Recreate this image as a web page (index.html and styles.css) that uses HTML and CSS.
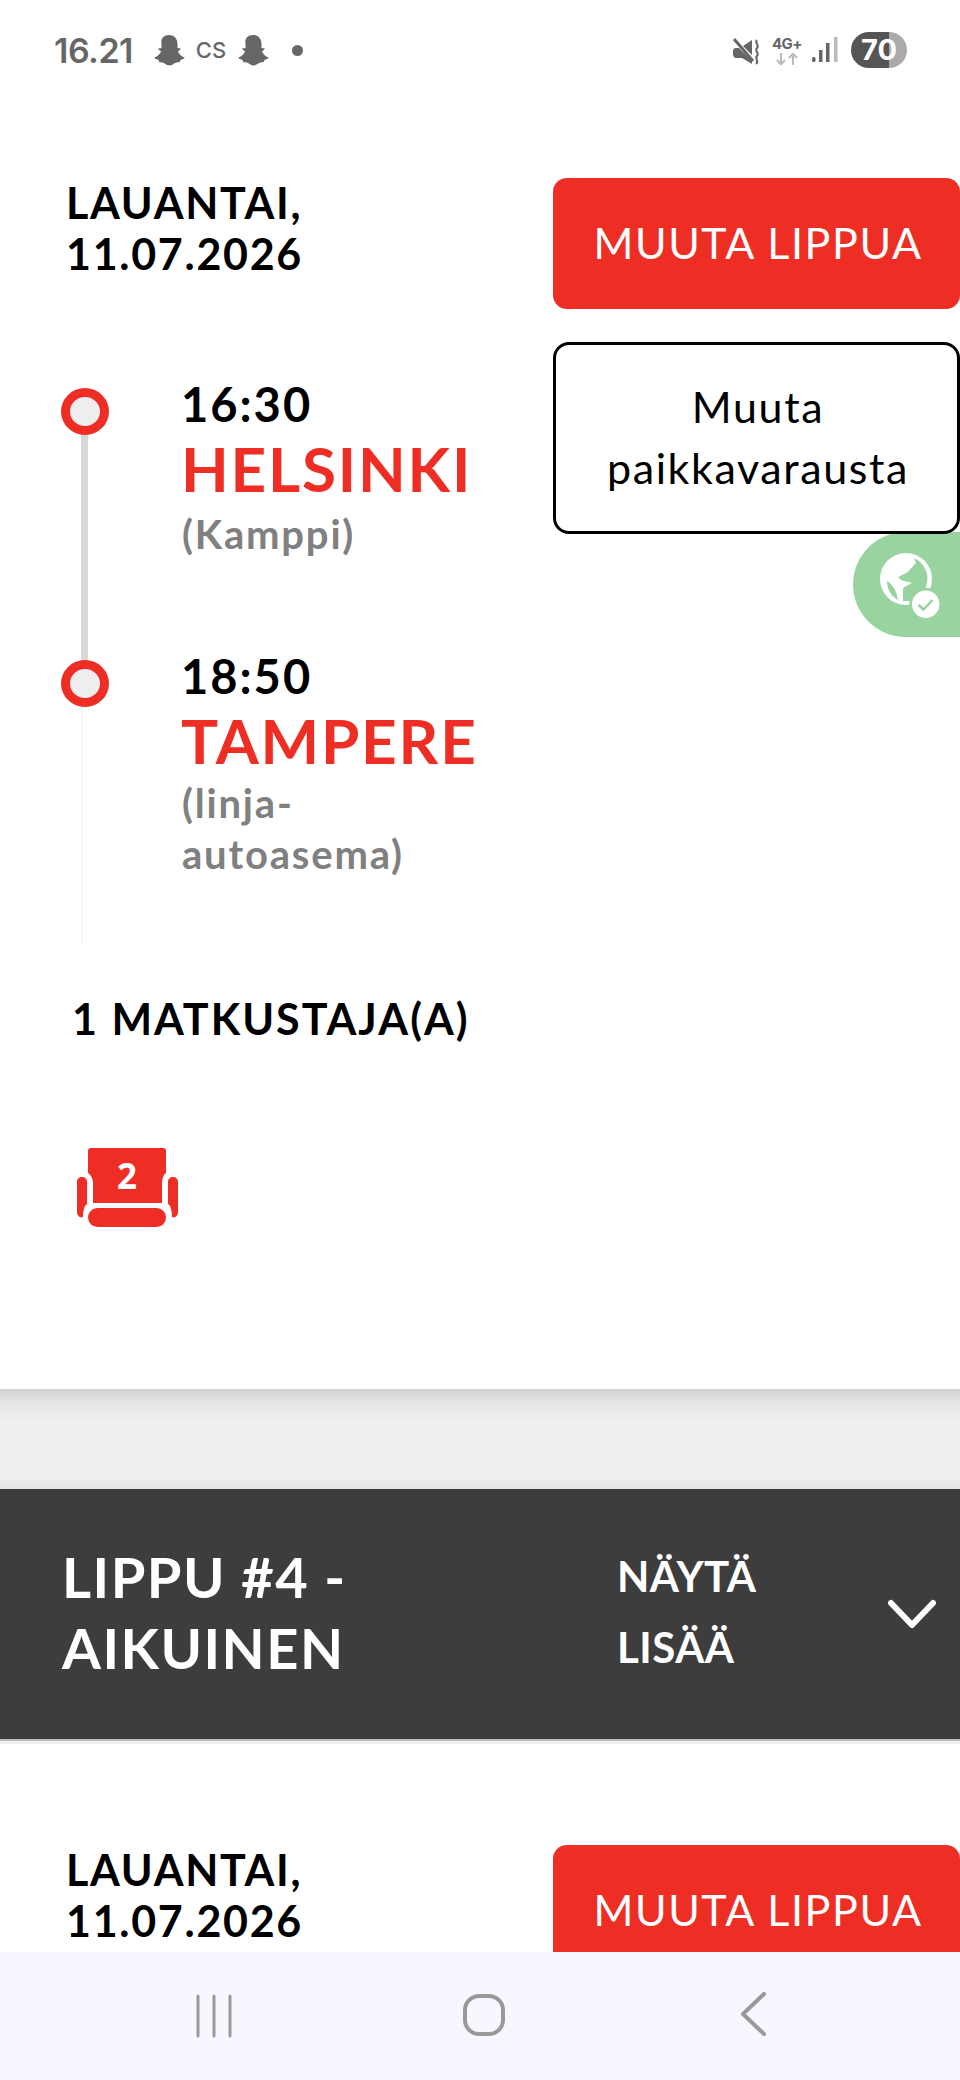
FILE: index.html
```html
<!DOCTYPE html>
<html lang="fi">
<head>
<meta charset="utf-8">
<title>Lippu</title>
<link rel="stylesheet" href="styles.css">
</head>
<body>
<div class="page">
  <header class="status">
    <div class="status-left">
      <span class="clock">16.21</span>
      <svg class="ghost" viewBox="0 0 32 32"><path d="M16 1c5.500 0 8.500 4 8.500 9v4c1 .6 2.300-.3 3 .6.600 1-1.500 1.900-2.500 2.400.5 2.500 3.500 5.500 6.500 6.500.6 1.500-2.500 2-4 2.500-.6 1.500-.5 2.500-2.500 2.300-3-.4-5 3.200-8.500 3.200s-5.500-3.600-8.500-3.200c-2 .2-1.900-.8-2.500-2.300-1.500-.5-4.600-1-4-2.500 3-1 6-4 6.500-6.500-1-.5-3.100-1.400-2.500-2.400.7-.9 2 0 3-.6v-4C7.500 5 10.500 1 16 1z"/></svg>
      <span class="cs">CS</span>
      <svg class="ghost" viewBox="0 0 32 32"><path d="M16 1c5.500 0 8.500 4 8.500 9v4c1 .6 2.300-.3 3 .6.600 1-1.500 1.900-2.500 2.400.5 2.500 3.500 5.500 6.500 6.500.6 1.500-2.500 2-4 2.500-.6 1.500-.5 2.500-2.500 2.300-3-.4-5 3.200-8.500 3.200s-5.500-3.600-8.500-3.200c-2 .2-1.900-.8-2.500-2.300-1.500-.5-4.600-1-4-2.500 3-1 6-4 6.500-6.500-1-.5-3.100-1.400-2.500-2.400.7-.9 2 0 3-.6v-4C7.500 5 10.500 1 16 1z"/></svg>
      <span class="dot"></span>
    </div>
    <div class="status-right">
      <svg class="mute" viewBox="5 8 36 30">
        <path d="M8 24c0-2 1-3 3-3h3l13 13v3l-10-6h-6c-2 0-3-2-3-4zM18 19l9-6v15z" fill="#666"/>
        <path d="M9 12l19 22" stroke="#666" stroke-width="3" fill="none"/>
        <path d="M32 13c-3 3 3 5 0 8s3 5 0 8 3 5-1 8" stroke="#666" stroke-width="2" fill="none"/>
      </svg>
      <div class="net">
        <span class="net-label">4G+</span>
        <svg class="net-arrows" viewBox="0 0 26 12"><path d="M7 0v11M3 7l4 4.500L11 7" stroke="#bbb" stroke-width="2" fill="none"/><path d="M19 12V1M15 5l4-4.500L23 5" stroke="#bbb" stroke-width="2" fill="none"/></svg>
      </div>
      <svg class="signal" viewBox="0 0 26 26"><rect x="0" y="20" width="3.500" height="5" rx="1.500" fill="#666"/><rect x="7" y="13" width="3.500" height="12" fill="#666"/><rect x="14" y="6" width="3.500" height="19" fill="#666"/><rect x="22" y="0" width="3.500" height="25" fill="#bbb"/></svg>
      <div class="battery">70</div>
    </div>
  </header>

  <section class="ticket-head">
    <div class="ticket-info">
      <div class="date">LAUANTAI,<br>11.07.2026</div>
      <div class="route">
        <div class="stop">
          <span class="marker"></span>
          <div class="stop-time">16:30</div>
          <div class="stop-city">HELSINKI</div>
          <div class="stop-place">(Kamppi)</div>
        </div>
        <div class="stop stop-last">
          <span class="marker"></span>
          <div class="stop-time">18:50</div>
          <div class="stop-city">TAMPERE</div>
          <div class="stop-place">(linja-autoasema)</div>
        </div>
      </div>
    </div>
    <div class="ticket-actions">
      <button class="btn-red">MUUTA LIPPUA</button>
      <button class="btn-outline">Muuta<br>paikkavarausta</button>
    </div>
  </section>

  <div class="passengers">1 MATKUSTAJA(A)</div>
  <div class="seat">
    <svg viewBox="0 0 104 82" width="104" height="82">
      <path d="M15 2h72a3 3 0 0 1 3 3v22c-3 2-4 6-4 10v20H17V37c0-4-2-8-5-10V5a3 3 0 0 1 3-3z" fill="#ee2e24"/>
      <path d="M1 36c0-3 2-5 5-5s5 2 5 5v22c-2 1-4 5-4 13-3 1-6-1-6-5z" fill="#ee2e24"/>
      <path d="M102 36c0-3-2-5-5-5s-5 2-5 5v22c2 1 4 5 4 13 3 1 6-1 6-5z" fill="#ee2e24"/>
      <rect x="12" y="62" width="78" height="19" rx="9.500" fill="#ee2e24"/>
      <text x="51" y="43" class="seat-no">2</text>
    </svg>
  </div>

  <div class="divider"></div>

  <section class="accordion">
    <div class="acc-title">LIPPU #4 -<br>AIKUINEN</div>
    <div class="acc-more">NÄYTÄ<br>LISÄÄ</div>
    <svg class="chevron" viewBox="0 0 48 30"><path d="M3 4l21 22L45 4" stroke="#fff" stroke-width="6" fill="none" stroke-linecap="round" stroke-linejoin="round"/></svg>
  </section>

  <section class="ticket-head ticket-next">
    <div class="ticket-info">
      <div class="date">LAUANTAI,<br>11.07.2026</div>
    </div>
    <div class="ticket-actions">
      <button class="btn-red">MUUTA LIPPUA</button>
    </div>
  </section>

  <div class="translate">
    <svg viewBox="0 0 80 80" width="80" height="80">
      <circle cx="36" cy="34" r="26" fill="#fff"/>
      <path d="M44 13l2 5-3 3-5 6-10 5 3 3 11 3-9 5 0 7 0 6A22.500 22.500 0 0 0 44 13z" fill="#99d3a0"/>
      <path d="M17 36c5 3 10 10 11 19-6-3-11-10-11-19z" fill="#99d3a0"/>
      <circle cx="55.700" cy="59.300" r="16.500" fill="#99d3a0"/>
      <circle cx="55.700" cy="59.300" r="13.700" fill="#fff"/>
      <path d="M48.500 60l5 4.500 9-9.500" stroke="#99d3a0" stroke-width="2.500" fill="none"/>
    </svg>
  </div>

  <nav class="navbar">
    <svg class="nav-recent" viewBox="0 0 40 44"><path d="M4 2v40M20 2v40M36 2v40" stroke="#999" stroke-width="3" stroke-linecap="round"/></svg>
    <svg class="nav-home" viewBox="0 0 44 44"><rect x="3" y="3" width="38" height="38" rx="14" stroke="#999" stroke-width="4" fill="none"/></svg>
    <svg class="nav-back" viewBox="0 0 30 44"><path d="M26 2L5 22l21 20" stroke="#999" stroke-width="4" fill="none" stroke-linecap="round" stroke-linejoin="round"/></svg>
  </nav>
</div>
</body>
</html>
```

FILE: styles.css
```css
* { box-sizing: border-box; }
html, body { margin: 0; padding: 0; background: #fff; }
.page {
  position: relative;
  width: 960px;
  height: 2080px;
  overflow: hidden;
  background: #fff;
  font-family: "Lato", "Open Sans", sans-serif;
  color: #000;
}

/* status bar */
.status {
  height: 100px;
  display: flex;
  justify-content: space-between;
  align-items: center;
  padding: 0 53px 0 54px;
  color: #666;
}
.status-left, .status-right { display: flex; align-items: center; }
.clock { font: 600 34px "Inter", sans-serif; letter-spacing: -0.5px; width: 99px; }
.ghost { width: 32px; height: 32px; fill: #666; }
.cs { font: 500 22px "Inter", sans-serif; width: 52px; text-align: center; }
.dot { width: 11px; height: 11px; border-radius: 50%; background: #666; margin-left: 23px; }
.mute { width: 36px; height: 30px; margin-right: 6px; }
.net { width: 30px; display: flex; flex-direction: column; align-items: center; margin-right: 10px; }
.net-label { font: 700 15px/15px "Inter", sans-serif; letter-spacing: -0.5px; margin-bottom: 2px; }
.net-arrows { width: 26px; height: 12px; }
.signal { width: 26px; height: 26px; margin-right: 13px; }
.battery {
  width: 56px;
  height: 36px;
  border-radius: 18px;
  background: linear-gradient(90deg, #555 0 68%, #aaa 68% 100%);
  color: #fff;
  font: 700 29px/36px "Inter", sans-serif;
  text-align: center;
}

/* ticket head */
.ticket-head {
  display: flex;
  justify-content: space-between;
  padding: 78px 0 0 61px;
}
.ticket-info { width: 480px; }
.date {
  font-size: 43px;
  line-height: 50.500px;
  font-weight: 700;
  margin-left: 5px;
  letter-spacing: 1.700px;
}
.ticket-actions { width: 407px; display: flex; flex-direction: column; gap: 33px; }
.btn-red, .btn-outline { display: block; font-family: inherit; width: 100%; }
.btn-red {
  height: 131px;
  border: 0;
  border-radius: 14px;
  background: #ee2e24;
  color: #fff;
  font-size: 43px;
  letter-spacing: 1.600px;
  padding: 0 0 3px 3px;
}
.btn-outline {
  height: 192px;
  border: 3px solid #000;
  border-radius: 16px;
  background: #fff;
  color: #000;
  font-size: 43px;
  letter-spacing: 1.600px;
  line-height: 61px;
  padding: 0 0 2px 3px;
  position: relative;
  z-index: 2;
}

/* route */
.route { margin-top: 102px; }
.stop {
  display: flow-root;
  position: relative;
  height: 272px;
  padding-left: 121px;
}
.stop::before {
  content: "";
  position: absolute;
  left: 20px;
  top: 20px;
  bottom: -20px;
  width: 7px;
  background: #d8d8d8;
}
.stop-last { height: 289px; }
.stop-last::before { width: 2px; background: #f6f6f6; bottom: 0; }
.marker {
  position: absolute;
  left: 0;
  top: 7px;
  width: 48px;
  height: 47px;
  border: 9px solid #ee2e24;
  border-radius: 50%;
  background: #eee;
  z-index: 1;
}
.stop-time { font-size: 47px; line-height: 51px; font-weight: 700; letter-spacing: 2px; margin-top: -2px; margin-left: -1px; }
.stop-city { font-size: 62px; line-height: 76px; font-weight: 700; color: #ee2e24; letter-spacing: 1.800px; margin-left: -1px; }
.stop-place { font-size: 40px; line-height: 51px; font-weight: 700; color: #808080; letter-spacing: 1.800px; margin-top: 3px; width: 310px; }
.stop-last .stop-place { margin-top: 0; }

/* passengers and seat */
.passengers {
  margin: 52px 0 0 72px;
  font-size: 43px;
  line-height: 50px;
  font-weight: 700;
  letter-spacing: 2px;
}
.seat { margin: 102px 0 0 76px; height: 82px; line-height: 0; }
.seat-no { font: 700 35px "Open Sans", sans-serif; fill: #fff; text-anchor: middle; }

/* divider */
.divider {
  margin-top: 161px;
  height: 100px;
  background: linear-gradient(#d2d2d2 0, #e6e6e6 14px, #efefef 34px, #efefef 88px, #e4e4e4 100px);
}

/* accordion */
.accordion {
  height: 252px;
  background: #3d3d3d;
  color: #fff;
  display: flex;
  align-items: center;
  padding-left: 62px;
  border-bottom: 2px solid #bbb;
  box-shadow: 0 3px 0 #eee;
}
.acc-title { font-size: 56px; line-height: 71px; font-weight: 700; letter-spacing: 1.500px; width: 555px; padding-bottom: 4px; }
.acc-more { font-size: 42px; line-height: 71px; font-weight: 700; letter-spacing: .5px; width: 271px; padding-bottom: 4px; }
.chevron { width: 48px; height: 30px; }

.ticket-next { padding-top: 104px; }

/* floating translate badge */
.translate {
  position: absolute;
  right: 0;
  top: 532px;
  width: 107px;
  height: 105px;
  background: #99d3a0;
  border-radius: 53px 0 0 53px;
  padding: 13px 0 0 17px;
  line-height: 0;
}

/* system nav */
.navbar {
  position: absolute;
  left: 0;
  right: 0;
  bottom: 0;
  height: 128px;
  background: #f8f6fe;
}
.navbar svg { position: absolute; }
.nav-recent { left: 194px; top: 42px; width: 40px; height: 44px; }
.nav-home { left: 462px; top: 41px; width: 44px; height: 44px; }
.nav-back { left: 738px; top: 40px; width: 30px; height: 44px; }
```
